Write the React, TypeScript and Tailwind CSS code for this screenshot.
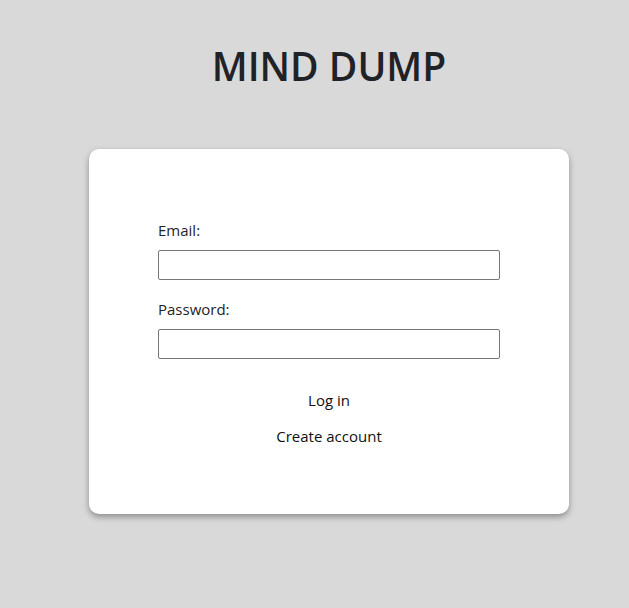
import { useState } from "react";

const App = () => {
  const [email, setEmail] = useState("");
  const [password, setPassword] = useState("");

  return (
    <div
      className="min-h-screen w-full bg-[#d9d9d9] text-[#1f2328] pt-[42px]"
      style={{ fontFamily: '"Open Sans", "Noto Sans", sans-serif' }}
    >
      <div className="w-[480px] ml-[89px]">
        {/* Header */}
        <h1 className="text-center text-[39px] leading-[48px] font-semibold">
          MIND DUMP
        </h1>

        {/* Card */}
        <div className="mt-[59px] bg-white rounded-[10px] shadow-[0_3px_6px_rgba(0,0,0,0.35)] px-[69px] pt-[71px] pb-[68px]">
          <form onSubmit={(e) => e.preventDefault()} className="flex flex-col">
            <label className="text-[15px] leading-[20px] mb-[10px]">Email:</label>
            <input
              type="email"
              value={email}
              onChange={(e) => setEmail(e.target.value)}
              className="h-[30px] w-full border border-[#767676] rounded-[2px] px-2 text-[15px] outline-none"
            />

            <label className="text-[15px] leading-[20px] mt-[19px] mb-[10px]">
              Password:
            </label>
            <input
              type="password"
              value={password}
              onChange={(e) => setPassword(e.target.value)}
              className="h-[30px] w-full border border-[#767676] rounded-[2px] px-2 text-[15px] outline-none"
            />

            <button
              type="submit"
              className="mt-[31px] self-center text-[15px] leading-[20px] text-[#111]"
            >
              Log in
            </button>
            <button
              type="button"
              className="mt-[16px] self-center text-[15px] leading-[20px] text-[#111]"
            >
              Create account
            </button>
          </form>
        </div>
      </div>
    </div>
  );
};

export default App;
